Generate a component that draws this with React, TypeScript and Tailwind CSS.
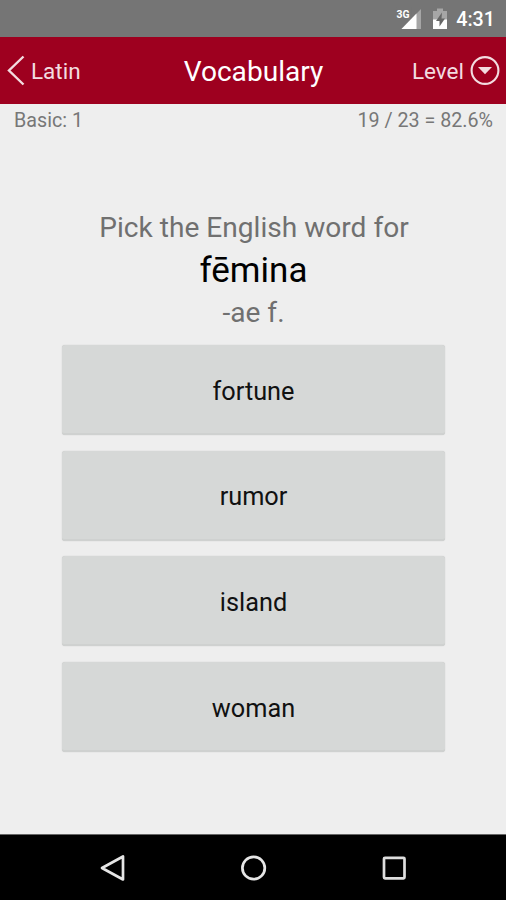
import React from "react";

const choices = ["fortune", "rumor", "island", "woman"];

function StatusBar() {
  return (
    <div className="flex h-[37px] shrink-0 items-center justify-end bg-[#757575] pr-[11px] pt-[2px] text-white">
      <svg width="60" height="28" viewBox="393 6 60 28" className="mr-[3px] shrink-0">
        <path d="M421 9V29H401.500Z" fill="#a6a6a6" />
        <path d="M396 7H411.500V18L401 21Z" fill="#757575" />
        <text x="396.5" y="18" fill="#fff" fontSize="11" fontWeight="700" fontFamily="Roboto, sans-serif" textLength="13" lengthAdjust="spacingAndGlyphs">3G</text>
        <path d="M416.500 13.500V29H401.500Z" fill="#fff" />
        <path d="M437 8.500H443V11H447V20H433V11H437Z" fill="#a6a6a6" />
        <path d="M433 19.500H447V29H433Z" fill="#fff" />
        <path d="M442 12.500L436 21H439.500V26.500L445 18.500H441.500Z" fill="#666" />
      </svg>
      <span className="text-[19.7px] leading-[24px] font-medium">4:31</span>
    </div>
  );
}

function TitleBar() {
  return (
    <header className="grid h-[67px] shrink-0 grid-cols-[1fr_auto_1fr] items-center bg-[#9e001f] pl-[7px] pr-[6px] text-[22.5px] text-[#f3dce0]">
      <button className="flex items-center gap-[6px]">
        <svg width="18" height="32" viewBox="0 0 18 32" fill="none" stroke="#f3dce0" strokeWidth="2.400">
          <path d="M16.500 1.500L2 15.500L16.500 29.500" />
        </svg>
        <span className="pt-[2px]">Latin</span>
      </button>
      <h1 className="pt-[3px] text-[28.1px] text-white">Vocabulary</h1>
      <button className="flex items-center justify-end gap-[6px]">
        <span className="pt-[2px]">Level</span>
        <svg width="30" height="30" viewBox="0 0 30 30">
          <circle cx="15" cy="14.500" r="13.400" fill="none" stroke="#f3dce0" strokeWidth="2.100" />
          <path d="M8 11H22L15 18.300Z" fill="#f3dce0" />
        </svg>
      </button>
    </header>
  );
}

function NavigationBar() {
  return (
    <nav className="flex h-[66px] shrink-0 items-center justify-center gap-[112px] border-t border-[#666] bg-black">
      <svg width="28" height="30" viewBox="0 0 28 30" fill="none" stroke="#e6e6e6" strokeWidth="2.700" strokeLinejoin="round">
        <path d="M24 3.500V26.500L3 15Z" />
      </svg>
      <svg width="28" height="30" viewBox="0 0 28 30" fill="none" stroke="#e6e6e6" strokeWidth="2.700">
        <circle cx="14.600" cy="15" r="11.200" />
      </svg>
      <svg width="28" height="30" viewBox="0 0 28 30" fill="none" stroke="#dedede" strokeWidth="2.700">
        <rect x="5" y="4.800" width="20.500" height="20.500" rx="1" />
      </svg>
    </nav>
  );
}

export default function App() {
  return (
    <div className="flex h-[900px] w-[506px] flex-col overflow-hidden bg-[#eee] font-['Roboto',sans-serif]">
      <StatusBar />
      <TitleBar />
      <div className="flex justify-between pl-[14px] pr-[13px] pt-[5px] text-[19.7px] leading-[24px] text-[#777]">
        <span>Basic: 1</span>
        <span>19 / 23 = 82.6%</span>
      </div>
      <main className="flex flex-1 flex-col items-center pt-[78px]">
        <p className="pl-[2px] text-[28.1px] leading-[34px] text-[#707070]">Pick the English word for</p>
        <p className="mt-[5px] pl-[1px] text-[35px] leading-[42px] text-black">fēmina</p>
        <p className="mt-[4px] pl-[1px] text-[28.1px] leading-[34px] text-[#707070]">-ae f.</p>
        <div className="mt-[15.300px] flex flex-col gap-[15.600px]">
          {choices.map((word) => (
            <button
              key={word}
              className="h-[90px] w-[383px] rounded-[3px] border-b-2 border-[#cfd1d0] bg-[#d6d8d7] pl-[1px] pt-[5px] text-[25.300px] text-[#111] shadow-[0_0_1px_#bbb]"
            >
              {word}
            </button>
          ))}
        </div>
      </main>
      <NavigationBar />
    </div>
  );
}
